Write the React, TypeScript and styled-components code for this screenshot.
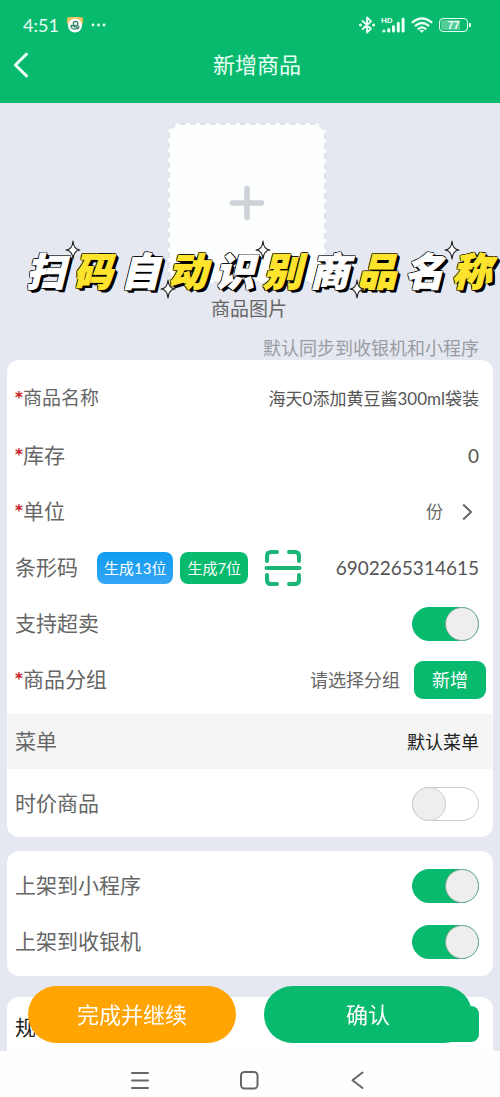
import React, { useState } from "react";
import styled, { createGlobalStyle, css } from "styled-components";

const green = "#08ba6e";
const sans = `Lato, "Noto Sans CJK SC", sans-serif`;

const GlobalStyle = createGlobalStyle`
  *, *::before, *::after { box-sizing: border-box; }
  body { margin: 0; font-family: ${sans}; color: #666; background: #fff; }
  button, input, select { font-family: inherit; margin: 0; }
`;

const Shell = styled.div`
  display: flex;
  flex-direction: column;
  height: 100vh;
`;

const Header = styled.header`
  flex: none;
  padding: 10px 0 13px;
  background: ${green};
  color: #eafff5;
`;

const StatusBar = styled.div`
  display: flex;
  align-items: center;
  height: 30px;
  padding: 0 29px 0 23px;
  font-size: 18px;
`;

const StatusIcons = styled.div`
  display: flex;
  align-items: center;
  gap: 6px;
  margin-left: auto;
`;

const StatusLeft = styled.div`
  display: flex;
  align-items: center;
  gap: 7px;
`;

const Signal = styled.span`
  position: relative;
  display: flex;
`;

const SignalTag = styled.span`
  position: absolute;
  top: 0;
  left: 0;
  font: bold 8px/7px "Liberation Sans", sans-serif;
`;

const Battery = styled.span`
  display: flex;
  align-items: center;
  gap: 1px;
  &::after {
    content: "";
    width: 2px;
    height: 4px;
    border-radius: 0 1px 1px 0;
    background: currentColor;
  }
`;

const BatteryCell = styled.span`
  width: 29px;
  height: 14px;
  border: 1px solid currentColor;
  border-radius: 4px;
  background: linear-gradient(90deg, #55cb98 74%, transparent 74%) content-box;
  padding: 1px;
  font: bold 11px/10px "Liberation Sans", sans-serif;
  text-align: center;
`;

const TitleBar = styled.div`
  display: grid;
  grid-template-columns: 56px 1fr 42px;
  align-items: center;
  height: 50px;
`;

const BackButton = styled.button`
  display: flex;
  padding: 0 0 0 12px;
  border: 0;
  background: none;
  color: inherit;
`;

const Title = styled.h1`
  margin: 0;
  font-size: 22px;
  line-height: 30px;
  font-weight: 400;
  text-align: center;
`;

const Body = styled.div`
  position: relative;
  flex: 1;
  min-height: 0;
  display: flex;
`;

const Scroller = styled.main`
  flex: 1;
  overflow-y: auto;
  scrollbar-width: none;
  padding: 20px 7px 0;
  background: #e5e8f0;
`;

const Upload = styled.section`
  position: relative;
  display: flex;
  flex-direction: column;
  align-items: center;
  margin: 0 -7px;
`;

const UploadBox = styled.button`
  display: flex;
  align-items: center;
  justify-content: center;
  width: 158px;
  height: 160px;
  margin-right: 6px;
  border: 2px dashed #e0e3e8;
  border-radius: 12px;
  background: #fdfefe;
`;

const UploadLabel = styled.div`
  margin: 12px 2px 0 0;
  font-size: 19px;
  line-height: 28px;
`;

const Banner = styled.h2`
  position: absolute;
  top: 125px;
  left: 0;
  right: 0;
  display: flex;
  justify-content: space-between;
  margin: 0;
  padding: 0 9px 0 26px;
  font-size: 39px;
  line-height: 46px;
  font-weight: 900;
  font-style: italic;
  pointer-events: none;
`;

const BannerChar = styled.span<{ $lit: boolean }>`
  position: relative;
  color: ${(p) => (p.$lit ? "#ffe42e" : "#fff")};
  -webkit-text-stroke: 1px ${(p) => (p.$lit ? "#ffe42e" : "#fff")};
  text-shadow:
    -1px -1px 0 #000, 0 -1px 0 #000, 1px -1px 0 #000,
    -1px 0 0 #000, 1px 0 0 #000,
    -1px 1px 0 #000, 0 1px 0 #000, 1px 1px 0 #000,
    0 0 1px #000, 0 0 1px #000,
    2px 1px 0 #000, 2px 2px 0 #000, 3px 2px 0 #000, 3px 3px 0 #000;
`;

const Sparkle = styled.svg<{ $low?: boolean }>`
  position: absolute;
  left: -8px;
  top: ${(p) => (p.$low ? "31px" : "-8px")};
`;

const Hint = styled.p`
  margin: 13px 14px 0;
  font-size: 18px;
  line-height: 24px;
  text-align: right;
  color: #999ca3;
`;

const Card = styled.section<{ $gap?: number; $pad: string }>`
  margin-top: ${(p) => p.$gap ?? 0}px;
  padding: ${(p) => p.$pad};
  border-radius: 12px;
  background: #fff;
`;

const Row = styled.div<{ $height?: number; $flush?: boolean; $band?: boolean }>`
  display: flex;
  align-items: center;
  min-height: ${(p) => p.$height ?? 56}px;
  padding: 0 ${(p) => (p.$flush ? 7 : 14)}px 0 8px;
  ${(p) =>
    p.$band &&
    css`
      margin: 6px 0 7px;
      background: #f5f5f5;
    `}
`;

const Label = styled.label<{ $small?: boolean }>`
  flex: none;
  display: flex;
  padding-bottom: 2px;
  font-size: ${(p) => (p.$small ? 19 : 21)}px;
  line-height: 30px;
`;

const SectionTitle = styled.h3`
  margin: 0;
  padding-top: 6px;
  color: #222;
  font-size: 21px;
  line-height: 30px;
  font-weight: 400;
`;

const Star = styled.span`
  width: 8px;
  color: #c8201e;
  font: bold 15px/30px "DejaVu Sans", sans-serif;
`;

const TextField = styled.input<{ $size: number }>`
  flex: 1;
  min-width: 0;
  padding: 0;
  border: 0;
  outline: 0;
  background: none;
  color: #555;
  font-size: ${(p) => p.$size}px;
  line-height: 28px;
  text-align: right;
`;

const Picker = styled.select<{ $size: number; $dark?: boolean }>`
  appearance: none;
  margin-left: auto;
  padding: 0;
  border: 0;
  outline: 0;
  background: none;
  color: ${(p) => (p.$dark ? "#222" : "#666")};
  font-size: ${(p) => p.$size}px;
  line-height: 28px;
  text-align-last: right;
`;

const Chevron = styled.svg`
  margin: 0 6px 0 19px;
`;

const CodeTools = styled.div`
  display: flex;
  align-items: center;
  gap: 7px;
  margin-left: 19px;
`;

const CodeButton = styled.button<{ $blue?: boolean }>`
  height: 32px;
  padding: 0 7px;
  border: 0;
  border-radius: 8px;
  background: ${(p) => (p.$blue ? "linear-gradient(#0f9cf0, #35a5f5)" : green)};
  color: #fff;
  font-size: 15px;
  line-height: 22px;
  white-space: nowrap;
`;

const ScanButton = styled.button`
  display: flex;
  margin-left: 9px;
  padding: 0;
  border: 0;
  background: none;
`;

const AddButton = styled.button`
  width: 72px;
  height: 38px;
  margin-left: 14px;
  padding: 0 0 2px;
  border: 0;
  border-radius: 9px;
  background: ${green};
  color: #fff;
  font-size: 18px;
`;

const Toggle = styled.input`
  appearance: none;
  display: flex;
  width: 67px;
  height: 34px;
  margin-left: auto;
  border: 1px solid #ccc;
  border-radius: 17px;
  background: #fff;
  &::before {
    content: "";
    width: 34px;
    height: 34px;
    margin: -1px;
    border: 1px solid #ccc;
    border-radius: 50%;
    background: #eee;
  }
  &:checked {
    justify-content: flex-end;
    border-color: ${green};
    background: ${green};
  }
  &:checked::before {
    border-color: #7fa896;
  }
`;

const SpecButton = styled.button`
  width: 64px;
  height: 36px;
  margin-left: auto;
  border: 0;
  border-radius: 8px;
  background: ${green};
`;

const Actions = styled.div`
  position: absolute;
  left: 28px;
  right: 28px;
  bottom: 8px;
  display: flex;
  gap: 28px;
`;

const ActionButton = styled.button<{ $color: string }>`
  flex: 1;
  height: 57px;
  padding: 0 0 3px;
  border: 0;
  border-radius: 29px;
  background: ${(p) => p.$color};
  color: #fff;
  font-size: 22px;
`;

const SystemNav = styled.nav`
  flex: none;
  display: flex;
  justify-content: center;
  gap: 89px;
  height: 46px;
  padding: 19px 2px 0 0;
  background: #fefefe;
`;

const NavButton = styled.button`
  display: flex;
  height: 20px;
  padding: 0;
  border: 0;
  background: none;
`;

function Switch({ id, on = false }: { id: string; on?: boolean }) {
  const [checked, setChecked] = useState(on);
  return (
    <Toggle id={id} type="checkbox" role="switch" checked={checked} onChange={(e) => setChecked(e.target.checked)} />
  );
}

function Twinkle({ low }: { low?: boolean }) {
  return (
    <Sparkle $low={low} width="16" height="20" viewBox="0 0 16 20" aria-hidden="true">
      <path
        d="M8 1 Q8.6 9.4 15 10 Q8.6 10.6 8 19 Q7.4 10.6 1 10 Q7.4 9.4 8 1Z"
        fill="#fff"
        stroke="#222"
        strokeWidth="1.1"
        strokeLinejoin="round"
      />
    </Sparkle>
  );
}

const headline = Array.from("扫码自动识别商品名称");

export default function App() {
  return (
    <Shell>
      <GlobalStyle />
      <Header>
        <StatusBar>
          <StatusLeft>
            <span>4:51</span>
            <svg width="18" height="18" viewBox="0 0 18 18" aria-hidden="true">
              <path d="M1 3Q1 1 4 1H14Q17 1 17 3V6Q17 9 14 9H4Q1 9 1 6Z" fill="#e9c45c" />
              <circle cx="9" cy="9.5" r="7" fill="#fff" />
              <circle cx="9.6" cy="7.6" r="2.3" fill="none" stroke="#287f5e" strokeWidth="1.3" />
              <path d="M5 9.5Q4.6 13 8.5 13Q13.5 13 12.8 10.5Q10 12 7.5 10.2Q6 9 5 9.5Z" fill="none" stroke="#287f5e" strokeWidth="1.2" />
            </svg>
            <svg width="16" height="4" viewBox="0 0 16 4" fill="currentColor" aria-hidden="true">
              <circle cx="2" cy="2" r="1.4" />
              <circle cx="7.5" cy="2" r="1.4" />
              <circle cx="13" cy="2" r="1.4" />
            </svg>
          </StatusLeft>
          <StatusIcons>
            <svg width="16" height="18" viewBox="0 0 16 18" fill="none" stroke="currentColor" strokeWidth="1.9" strokeLinejoin="round" strokeLinecap="round" aria-hidden="true">
              <path d="M3.6 5 L12 12.6 L8 16.5 V1.5 L12 5.4 L3.6 13" />
              <circle cx="1.4" cy="9" r=".6" />
              <circle cx="14.6" cy="9" r=".6" />
            </svg>
            <Signal>
              <SignalTag>HD</SignalTag>
              <svg width="24" height="16" viewBox="0 0 24 16" stroke="currentColor" strokeWidth="3" strokeLinecap="round" aria-hidden="true">
                <path d="M2.9 13.9V14M7.7 12.4V14M12.5 9.4V14M17.3 6.2V14M22.1 2V14" />
              </svg>
            </Signal>
            <svg width="22" height="16" viewBox="0 0 22 16" fill="none" stroke="currentColor" strokeWidth="2.3" strokeLinecap="round" aria-hidden="true">
              <path d="M1.6 5.2Q11 -2.4 20.4 5.2M4.6 8.6Q11 3.4 17.4 8.6M7.6 11.7Q11 9 14.4 11.7" />
              <path d="M9.4 13.4H12.6L11 15.2Z" fill="currentColor" strokeWidth="1" />
            </svg>
            <Battery>
              <BatteryCell>77</BatteryCell>
            </Battery>
          </StatusIcons>
        </StatusBar>
        <TitleBar>
          <BackButton type="button" aria-label="返回">
            <svg width="18" height="26" viewBox="0 0 18 26" fill="none" stroke="currentColor" strokeWidth="3" strokeLinecap="round" strokeLinejoin="round">
              <path d="M14.5 2.2L3.4 13L14.5 23.8" />
            </svg>
          </BackButton>
          <Title>新增商品</Title>
        </TitleBar>
      </Header>

      <Body>
        <Scroller>
          <Upload>
            <UploadBox type="button" aria-label="添加图片">
              <svg width="36" height="36" viewBox="0 0 36 36" stroke="#cdd2d8" strokeWidth="5.5" strokeLinecap="round">
                <path d="M18 3.5V32.5M3.5 18H32.5" />
              </svg>
            </UploadBox>
            <UploadLabel>商品图片</UploadLabel>
            <Banner>
              {headline.map((char, i) => (
                <BannerChar key={i} $lit={i % 2 === 1}>
                  {i % 4 === 1 && <Twinkle />}
                  {i % 4 === 3 && <Twinkle low />}
                  {char}
                </BannerChar>
              ))}
            </Banner>
          </Upload>
          <Hint>默认同步到收银机和小程序</Hint>

          <Card $pad="10px 0 5px">
            <Row $height={58}>
              <Label htmlFor="name" $small><Star>*</Star>商品名称</Label>
              <TextField id="name" $size={17} defaultValue="海天0添加黄豆酱300ml袋装" />
            </Row>
            <Row>
              <Label htmlFor="stock"><Star>*</Star>库存</Label>
              <TextField id="stock" $size={19} defaultValue="0" />
            </Row>
            <Row>
              <Label htmlFor="unit"><Star>*</Star>单位</Label>
              <Picker id="unit" $size={17}><option>份</option></Picker>
              <Chevron width="11" height="18" viewBox="0 0 11 18" fill="none" stroke="#666" strokeWidth="2" aria-hidden="true">
                <path d="M1.2 1.5L9 9L1.2 16.5" />
              </Chevron>
            </Row>
            <Row>
              <Label htmlFor="barcode">条形码</Label>
              <CodeTools>
                <CodeButton type="button" $blue>生成13位</CodeButton>
                <CodeButton type="button">生成7位</CodeButton>
                <ScanButton type="button" aria-label="扫码">
                  <svg width="38" height="38" viewBox="0 0 38 38" fill="none" stroke="#1bb577" strokeWidth="4" strokeLinecap="round">
                    <path d="M3 12V7Q3 3 7 3H13M25 3H31Q35 3 35 7V12M3 26V31Q3 35 7 35H13M25 35H31Q35 35 35 31V26M2.5 19H35.5" />
                  </svg>
                </ScanButton>
              </CodeTools>
              <TextField id="barcode" $size={19} defaultValue="6902265314615" />
            </Row>
            <Row>
              <Label htmlFor="oversell">支持超卖</Label>
              <Switch id="oversell" on />
            </Row>
            <Row $flush>
              <Label htmlFor="group"><Star>*</Star>商品分组</Label>
              <Picker id="group" $size={18}><option>请选择分组</option></Picker>
              <AddButton type="button">新增</AddButton>
            </Row>
            <Row $band $height={55}>
              <Label htmlFor="menu">菜单</Label>
              <Picker id="menu" $size={18} $dark><option>默认菜单</option></Picker>
            </Row>
            <Row>
              <Label htmlFor="market">时价商品</Label>
              <Switch id="market" />
            </Row>
          </Card>

          <Card $gap={14} $pad="7px 0 6px">
            <Row>
              <Label htmlFor="mini">上架到小程序</Label>
              <Switch id="mini" on />
            </Row>
            <Row>
              <Label htmlFor="pos">上架到收银机</Label>
              <Switch id="pos" on />
            </Row>
          </Card>

          <Card $gap={21} $pad="0 0 40px">
            <Row $height={54}>
              <SectionTitle>规</SectionTitle>
              <SpecButton type="button" aria-label="规" />
            </Row>
          </Card>
        </Scroller>
        <Actions>
          <ActionButton type="button" $color="#ffa400">完成并继续</ActionButton>
          <ActionButton type="button" $color={green}>确认</ActionButton>
        </Actions>
      </Body>

      <SystemNav>
        <NavButton type="button" aria-label="菜单">
          <svg width="20" height="20" viewBox="0 0 20 20" stroke="#666" strokeWidth="2" strokeLinecap="round">
            <path d="M2 3H18M2 10.5H18M2 18H18" />
          </svg>
        </NavButton>
        <NavButton type="button" aria-label="主页">
          <svg width="20" height="20" viewBox="0 0 20 20" fill="none" stroke="#666" strokeWidth="2">
            <rect x="2" y="2" width="16.5" height="16.5" rx="3.5" />
          </svg>
        </NavButton>
        <NavButton type="button" aria-label="返回">
          <svg width="20" height="20" viewBox="0 0 20 20" fill="none" stroke="#666" strokeWidth="2" strokeLinecap="round" strokeLinejoin="round">
            <path d="M14.5 2.5L4.5 10.3L14.5 18" />
          </svg>
        </NavButton>
      </SystemNav>
    </Shell>
  );
}
